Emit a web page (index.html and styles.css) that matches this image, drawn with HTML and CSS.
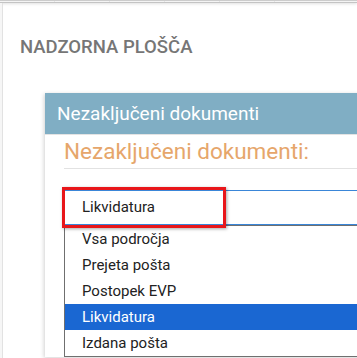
FILE: index.html
```html
<!DOCTYPE html>
<html lang="sl">
<head>
    <meta charset="UTF-8">
    <meta name="viewport" content="width=device-width, initial-scale=1.0">
    <title>Nadzorna plošča</title>
    <link rel="stylesheet" href="styles.css">
</head>
<body>
    <div class="topbar">
        <span></span><span></span><span></span><span></span><span></span>
    </div>
    <div class="layout">
        <div class="rail"></div>
        <div class="main">
            <h1 class="page-title">NADZORNA PLOŠČA</h1>

            <div class="panel">
                <div class="panel-head">Nezaključeni dokumenti</div>
                <div class="panel-body">
                    <h2 class="subtitle">Nezaključeni dokumenti:</h2>

                    <div class="select-wrap">
                        <div class="select">Likvidatura</div>
                        <span class="highlight"></span>
                    </div>
                    <ul class="options">
                        <li>Vsa področja</li>
                        <li>Prejeta pošta</li>
                        <li>Postopek EVP</li>
                        <li class="selected">Likvidatura</li>
                        <li>Izdana pošta</li>
                    </ul>
                </div>
            </div>
        </div>
    </div>
</body>
</html>
```

FILE: styles.css
```css
html, body {
    margin: 0;
    height: 100%;
    overflow: hidden;
}
body {
    font-family: Roboto, "Liberation Sans", sans-serif;
    background: #fff;
    color: #222;
}
.topbar {
    height: 1px;
    border-top: 1px solid #ccc;
    border-bottom: 1px solid #c4c4c4;
    box-shadow: 0 1px 3px rgba(0,0,0,0.12);
    display: flex;
    background: #f4f4f4;
}
.topbar span {
    width: 54px;
    border-right: 1px solid #e4e4e4;
}
.layout {
    display: flex;
    height: 100%;
}
.rail {
    width: 2px;
    border-right: 1px solid #e2e2e2;
    background: #f6f6f6;
    flex: none;
}
.main {
    flex: 1;
    padding-left: 17px;
    overflow: hidden;
}
.page-title {
    margin: 32px 0 0;
    font-size: 18.5px;
    font-weight: 500;
    color: #767676;
    line-height: 24px;
}
.panel {
    margin: 34px 0 0 25px;
    width: 500px;
    background: #fff;
    box-shadow: -1px 1px 4px rgba(0,0,0,0.18);
}
.panel-head {
    height: 41px;
    line-height: 41px;
    background: #80aec4;
    color: #fff;
    font-size: 19px;
    padding-left: 12px;
    border-bottom: 1px solid #e3e3e3;
}
.panel-body {
    padding-left: 19px;
}
.subtitle {
    margin: 0;
    font-size: 22.5px;
    font-weight: 400;
    color: #e6a66b;
    line-height: 33px;
    border-bottom: 1px solid #e2e2e2;
}
.select-wrap {
    position: relative;
    margin-top: 21px;
}
.select {
    height: 33px;
    line-height: 33px;
    border: 1px solid #3a86d8;
    border-right: none;
    border-left-color: #8aa4c0;
    padding-left: 17px;
    font-size: 15px;
}
.highlight {
    position: absolute;
    left: -2px;
    top: -3px;
    width: 158px;
    height: 35px;
    border: 3px solid #e8161a;
    box-shadow: 1px 1px 3px rgba(0,0,0,0.35);
}
.options {
    list-style: none;
    margin: 0;
    padding: 0;
    border: 1px solid #6f6f6f;
    border-right: none;
}
.options li {
    height: 26px;
    line-height: 26px;
    padding-left: 17px;
    font-size: 15px;
}
.options .selected {
    background: #1a67d2;
    color: #fff;
}
```
